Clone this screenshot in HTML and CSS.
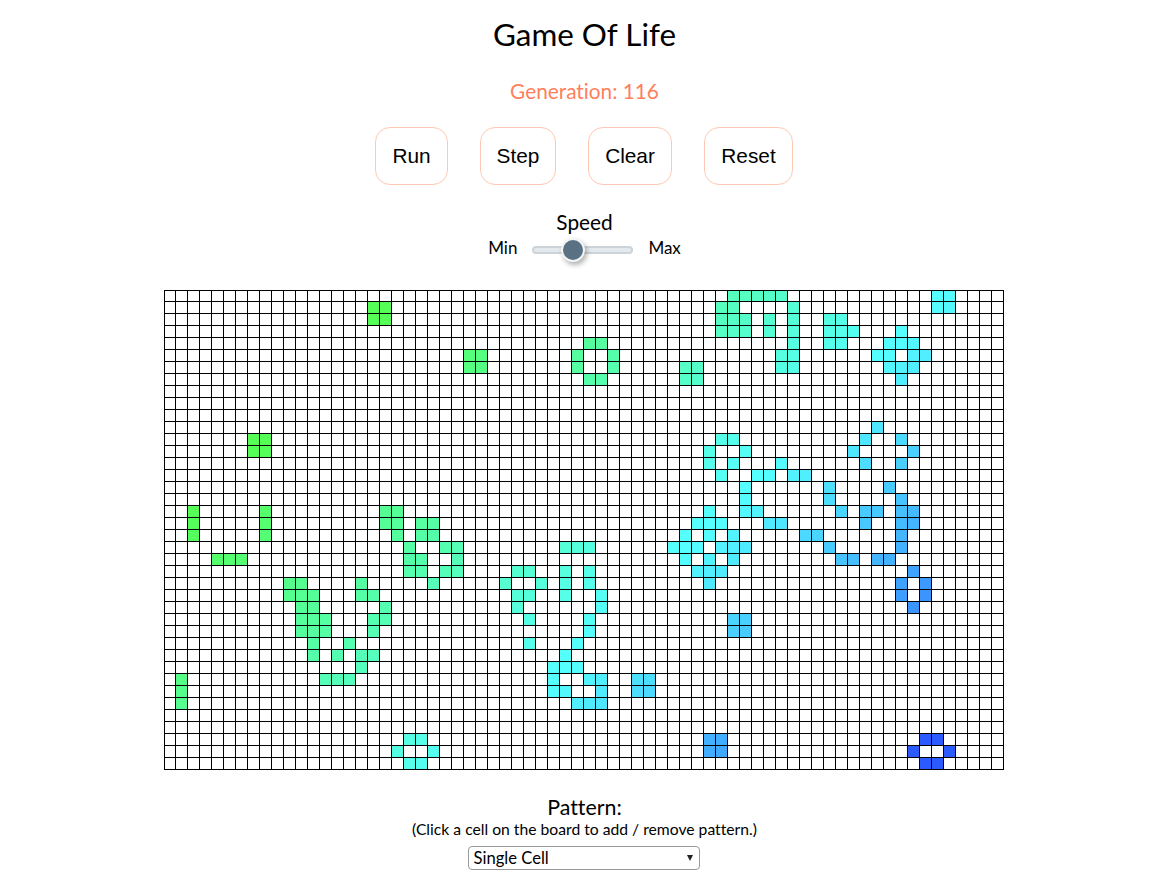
FILE: index.html
```html
<!DOCTYPE html>
<html lang="en">
<head>
    <meta charset="UTF-8">
    <title>Game Of Life</title>
    <meta name="viewport" content="width=device-width, initial-scale=1.0">
    <link rel="stylesheet" href="styles.css">
</head>
<body>
    <div class="app">
        <h1 class="title">Game Of Life</h1>
        <p class="generation">Generation: 116</p>
        <div class="controls">
            <button class="btn btn-run">Run</button>
            <button class="btn btn-step">Step</button>
            <button class="btn btn-clear">Clear</button>
            <button class="btn btn-reset">Reset</button>
        </div>
        <div class="speed">
            <div class="speed-label">Speed</div>
            <div class="speed-row">
                <span>Min</span>
                <input class="slider" type="range" min="0" max="100" value="37">
                <span>Max</span>
            </div>
        </div>
        <div class="board" id="board"></div>
        <div class="pattern">
            <div class="pattern-label">Pattern:</div>
            <div class="pattern-hint">(Click a cell on the board to add / remove pattern.)</div>
            <div class="select-wrap">
                <select class="pattern-select">
                    <option>Single Cell</option>
                    <option>Glider</option>
                    <option>Blinker</option>
                    <option>Pulsar</option>
                </select>
            </div>
        </div>
    </div>
    <script src="script.js"></script>
</body>
</html>
```

FILE: styles.css
```css
body {
    margin: 0;
    background: white;
    color: black;
    font-family: Lato, sans-serif;
    font-variant-ligatures: none;
}
.app {
    display: flex;
    flex-direction: column;
    align-items: center;
}
.title {
    margin: 14px 0 0;
    font-size: 31.4px;
    font-weight: 400;
    line-height: 40px;
}
.generation {
    margin: 24px 0 0;
    font-size: 20.8px;
    line-height: 26px;
    color: #ff7f5c;
}
.controls {
    display: flex;
    gap: 32px;
    margin: 23px 1px 0 0;
}
.btn {
    height: 58px;
    padding: 0;
    background: white;
    border: 1px solid #ffc8b4;
    border-radius: 15px;
    color: black;
    font-family: "Liberation Sans", Arial, sans-serif;
    font-size: 20.8px;
    cursor: pointer;
}
.btn-run {
    width: 73px;
}
.btn-step {
    width: 76px;
}
.btn-clear {
    width: 84px;
}
.btn-reset {
    width: 89px;
}
.speed {
    margin-top: 22px;
    text-align: center;
}
.speed-label {
    font-size: 20.8px;
    line-height: 29px;
}
.speed-row {
    display: flex;
    align-items: center;
    justify-content: center;
    gap: 15px;
    font-size: 17px;
    line-height: 24px;
}
.slider {
    appearance: none;
    -webkit-appearance: none;
    width: 101px;
    height: 8px;
    margin: 4px 0 0;
    background: #e4e9ed;
    border: 2px solid #cdd4d9;
    border-radius: 4px;
    box-sizing: border-box;
}
.slider::-webkit-slider-thumb {
    -webkit-appearance: none;
    width: 24px;
    height: 24px;
    background: #5a7184;
    border: 2px solid #f2f4f5;
    border-radius: 50%;
    box-sizing: border-box;
    box-shadow: 2px 3px 5px rgba(0, 0, 0, 0.3);
}
.board {
    display: grid;
    grid-template-columns: repeat(70, 12px);
    grid-auto-rows: 12px;
    width: 840px;
    margin: 30px 1px 0 0;
}
.cell {
    box-sizing: border-box;
    background: white;
    border-right: 1px solid black;
    border-bottom: 1px solid black;
}
.cell:nth-child(70n+1) {
    border-left: 1px solid black;
}
.cell:nth-child(-n+70) {
    border-top: 1px solid black;
}
.pattern {
    margin-top: 24px;
    text-align: center;
}
.pattern-label {
    font-size: 21.4px;
    line-height: 26px;
}
.pattern-hint {
    font-size: 15.7px;
    line-height: 18px;
}
.select-wrap {
    position: relative;
    width: 232px;
    margin: 8px auto 0;
}
.select-wrap::after {
    content: "";
    position: absolute;
    top: 9px;
    right: 7px;
    border-left: 3.5px solid transparent;
    border-right: 3.5px solid transparent;
    border-top: 6px solid #222;
    pointer-events: none;
}
.pattern-select {
    appearance: none;
    -webkit-appearance: none;
    display: block;
    width: 232px;
    height: 24px;
    padding: 0 4px;
    background: white;
    border: 1px solid #999;
    border-radius: 4px;
    font-family: Lato, sans-serif;
    font-size: 16.6px;
}
```

FILE: script.js
```js
const COLS = 70;
const ROWS = 40;

// live cells at generation 116, row -> columns
const live = {
    0: [47, 48, 49, 50, 51, 64, 65],
    1: [17, 18, 46, 47, 52, 64, 65],
    2: [17, 18, 46, 47, 48, 50, 52, 55, 56],
    3: [46, 47, 48, 50, 52, 55, 56, 57, 61],
    4: [35, 36, 52, 55, 56, 60, 61, 62],
    5: [25, 26, 34, 37, 51, 52, 59, 60, 62, 63],
    6: [25, 26, 34, 37, 43, 44, 51, 52, 60, 61, 62],
    7: [35, 36, 43, 44, 61],
    11: [59],
    12: [7, 8, 46, 47, 58, 61],
    13: [7, 8, 45, 48, 57, 62],
    14: [45, 47, 51, 58, 61],
    15: [46, 49, 50, 52, 53],
    16: [48, 55, 60],
    17: [48, 55, 61],
    18: [2, 8, 18, 19, 45, 48, 49, 56, 58, 59, 61, 62],
    19: [2, 8, 18, 19, 21, 22, 44, 45, 46, 50, 51, 58, 61, 62],
    20: [2, 8, 19, 21, 22, 43, 45, 47, 53, 54, 61],
    21: [20, 23, 24, 33, 34, 35, 42, 43, 44, 46, 47, 48, 55, 61],
    22: [4, 5, 6, 20, 21, 24, 43, 45, 47, 56, 57, 59, 60],
    23: [20, 21, 23, 24, 29, 30, 33, 35, 44, 45, 46, 62],
    24: [10, 11, 16, 22, 28, 31, 33, 35, 45, 61, 63],
    25: [10, 11, 12, 16, 17, 29, 30, 33, 36, 61, 63],
    26: [11, 12, 18, 29, 36, 62],
    27: [11, 12, 13, 17, 18, 30, 35, 47, 48],
    28: [11, 12, 13, 17, 35, 47, 48],
    29: [12, 15, 30, 34],
    30: [12, 14, 16, 17, 33],
    31: [16, 32, 33, 34],
    32: [1, 13, 14, 15, 32, 35, 36, 39, 40],
    33: [1, 32, 33, 36, 39, 40],
    34: [1, 34, 35, 36],
    37: [20, 21, 45, 46, 63, 64],
    38: [19, 22, 45, 46, 62, 65],
    39: [20, 21, 63, 64]
};

// colour runs from green top left to blue bottom right
const stops = [
    [20, 85, 255, 85],
    [64, 85, 255, 255],
    [80, 68, 187, 255],
    [100, 43, 91, 255]
];

function cellColor(t) {
    if (t <= stops[0][0]) return 'rgb(85, 255, 85)';
    for (let i = 1; i < stops.length; i++) {
        if (t <= stops[i][0]) {
            const a = stops[i - 1];
            const b = stops[i];
            const f = (t - a[0]) / (b[0] - a[0]);
            const mix = (n) => Math.round(a[n] + (b[n] - a[n]) * f);
            return `rgb(${mix(1)}, ${mix(2)}, ${mix(3)})`;
        }
    }
    return 'rgb(43, 91, 255)';
}

const board = document.getElementById('board');
for (let r = 0; r < ROWS; r++) {
    for (let c = 0; c < COLS; c++) {
        const cell = document.createElement('div');
        cell.className = 'cell';
        if (live[r] && live[r].includes(c)) {
            cell.style.background = cellColor(r + c);
        }
        board.appendChild(cell);
    }
}
```
